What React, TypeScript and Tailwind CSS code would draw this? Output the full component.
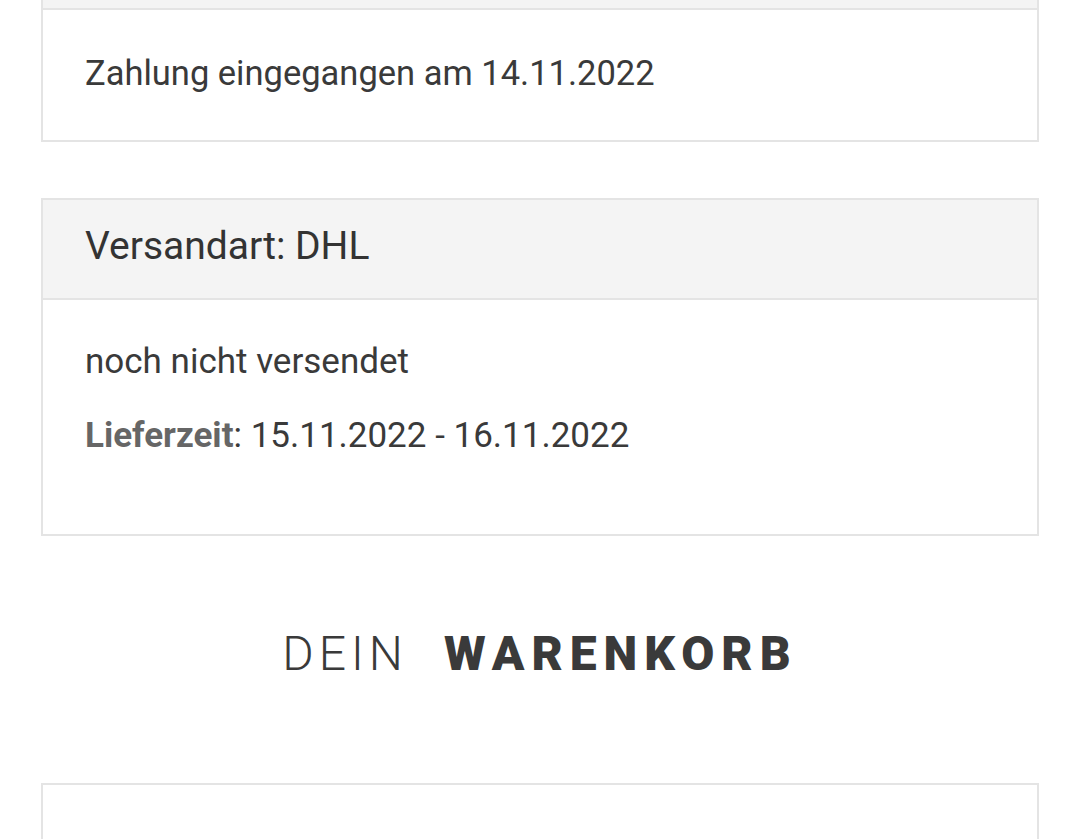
export default function App() {
  return (
    <div
      className="min-h-[839px] bg-white px-[41px] text-[#3a3a3a]"
      style={{ fontFamily: "Roboto, 'Noto Sans', sans-serif" }}
    >
      {/* Payment card (top cut off) */}
      <div className="border-x-2 border-b-2 border-[#e4e4e4]">
        <div className="h-[10px] border-b-2 border-[#e4e4e4] bg-[#f4f4f4]" />
        <div className="px-[42px] pt-[39px] pb-[43px] text-[34.5px] leading-[48px]">
          Zahlung eingegangen am 14.11.2022
        </div>
      </div>

      {/* Shipping card */}
      <div className="mt-[56px] border-2 border-[#e4e4e4]">
        <div className="flex h-[100px] items-center border-b-2 border-[#e4e4e4] bg-[#f4f4f4] px-[42px] pb-[6px] text-[39px] text-[#333]">
          Versandart: DHL
        </div>
        <div className="px-[42px] pt-[38px] pb-[74px] text-[35px] leading-[48px]">
          <p>noch nicht versendet</p>
          <p className="mt-[26px]">
            <span className="font-bold text-[#666]">Lieferzeit</span>: 15.11.2022 - 16.11.2022
          </p>
        </div>
      </div>

      {/* Cart heading */}
      <h2 className="flex h-[247px] items-center justify-center gap-[36px] pb-[12px] text-[48px] text-[#3a3a3a]">
        <span className="font-light tracking-[5px]">DEIN</span>
        <span className="font-black tracking-[7px]">WARENKORB</span>
      </h2>

      {/* Cart card */}
      <div className="h-[60px] border-x-2 border-t-2 border-[#e4e4e4]" />
    </div>
  );
}
